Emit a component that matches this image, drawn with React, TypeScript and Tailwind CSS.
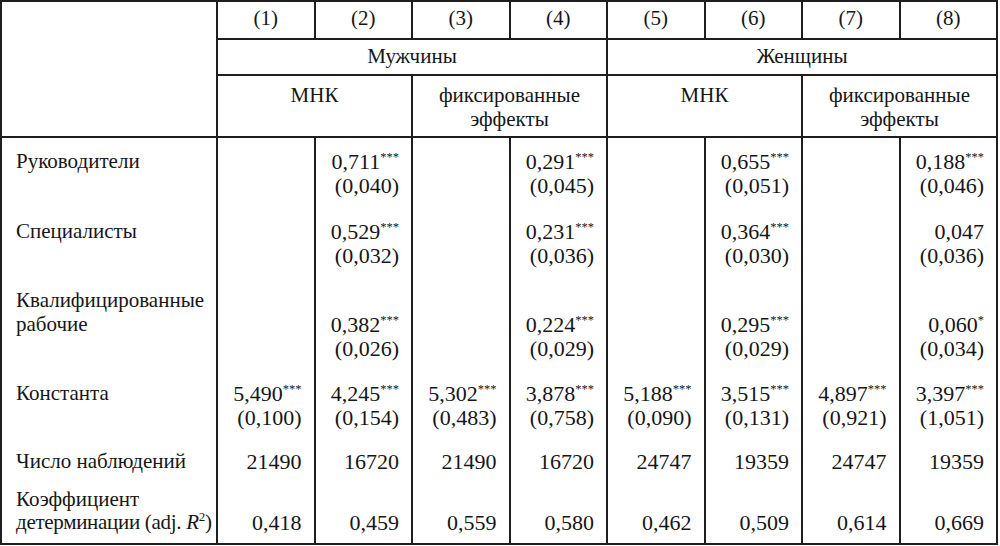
import type { ReactNode } from "react";

type Cell = { v: string; star?: string; se?: string } | null;

type Row = {
  label: ReactNode;
  pad: string;
  labelPad?: string;
  cells: Cell[];
};

const c = (v: string, star?: string, se?: string): Cell => ({ v, star, se });

const rows: Row[] = [
  {
    label: "Руководители",
    pad: "pt-[12px] pb-[11px]",
    cells: [null, c("0,711", "***", "(0,040)"), null, c("0,291", "***", "(0,045)"), null, c("0,655", "***", "(0,051)"), null, c("0,188", "***", "(0,046)")],
  },
  {
    label: "Специалисты",
    pad: "pt-[12px] pb-[11px]",
    cells: [null, c("0,529", "***", "(0,032)"), null, c("0,231", "***", "(0,036)"), null, c("0,364", "***", "(0,030)"), null, c("0,047", undefined, "(0,036)")],
  },
  {
    label: (
      <>
        Квалифицированные
        <br />
        рабочие
      </>
    ),
    pad: "pt-[11px] pb-[10px]",
    labelPad: "pt-[11px] pb-[34px]",
    cells: [null, c("0,382", "***", "(0,026)"), null, c("0,224", "***", "(0,029)"), null, c("0,295", "***", "(0,029)"), null, c("0,060", "*", "(0,034)")],
  },
  {
    label: "Константа",
    pad: "pt-[12px] pb-[10px]",
    cells: [
      c("5,490", "***", "(0,100)"),
      c("4,245", "***", "(0,154)"),
      c("5,302", "***", "(0,483)"),
      c("3,878", "***", "(0,758)"),
      c("5,188", "***", "(0,090)"),
      c("3,515", "***", "(0,131)"),
      c("4,897", "***", "(0,921)"),
      c("3,397", "***", "(1,051)"),
    ],
  },
  {
    label: "Число наблюдений",
    pad: "pt-[11px] pb-[4px]",
    cells: ["21490", "16720", "21490", "16720", "24747", "19359", "24747", "19359"].map((x) => c(x)),
  },
  {
    label: (
      <>
        Коэффициент
        <br />
        <span className="tracking-[-0.3px]">
          детерминации (adj. <i>R</i>
          <sup className="text-[13px] -top-[8px]">2</sup>)
        </span>
      </>
    ),
    pad: "pt-[10px] pb-[8px]",
    cells: ["0,418", "0,459", "0,559", "0,580", "0,462", "0,509", "0,614", "0,669"].map((x) => c(x)),
  },
];

const line = "border-[#1e1e1e]";

export default function App() {
  return (
    <div className="w-[1000px] h-[546px] bg-white font-['Liberation_Serif','DejaVu_Serif',serif] text-[21px] leading-[23.5px] text-[#161616]">
      <table className={`w-[998px] table-fixed border-collapse border-2 ${line}`}>
        <colgroup>
          <col className="w-[216px]" />
          <col />
          <col />
          <col />
          <col />
          <col />
          <col />
          <col />
          <col />
        </colgroup>
        <thead>
          <tr className="h-[38px]">
            <th rowSpan={3} className={`border-2 ${line}`} />
            {[1, 2, 3, 4, 5, 6, 7, 8].map((n) => (
              <th key={n} className={`border-2 ${line} font-normal text-center pb-[2px]`}>
                ({n})
              </th>
            ))}
          </tr>
          <tr className="h-[36px]">
            <th colSpan={4} className={`border-2 ${line} font-normal text-center`}>
              Мужчины
            </th>
            <th colSpan={4} className={`border-2 ${line} font-normal text-center`}>
              Женщины
            </th>
          </tr>
          <tr className="h-[62px]">
            {["МНК", "фикс", "МНК", "фикс"].map((k, i) => (
              <th key={i} colSpan={2} className={`border-2 ${line} font-normal text-center align-top pt-[8px]`}>
                {k === "МНК" ? (
                  "МНК"
                ) : (
                  <>
                    фиксированные
                    <br />
                    эффекты
                  </>
                )}
              </th>
            ))}
          </tr>
        </thead>
        <tbody>
          {rows.map((r, ri) => (
            <tr key={ri}>
              <td className={`border-x-2 ${line} align-top pl-[14px] whitespace-nowrap ${r.labelPad ?? r.pad}`}>{r.label}</td>
              {r.cells.map((cell, ci) => (
                <td key={ci} className={`border-x-2 ${line} align-bottom text-right pr-[12px] text-[22px] ${r.pad}`}>
                  {cell && (
                    <div className="flex flex-col items-end">
                      <span>
                        {cell.v}
                        {cell.star && <sup className="text-[12.5px] -top-[8px]">{cell.star}</sup>}
                      </span>
                      {cell.se && <span>{cell.se}</span>}
                    </div>
                  )}
                </td>
              ))}
            </tr>
          ))}
        </tbody>
      </table>
    </div>
  );
}
